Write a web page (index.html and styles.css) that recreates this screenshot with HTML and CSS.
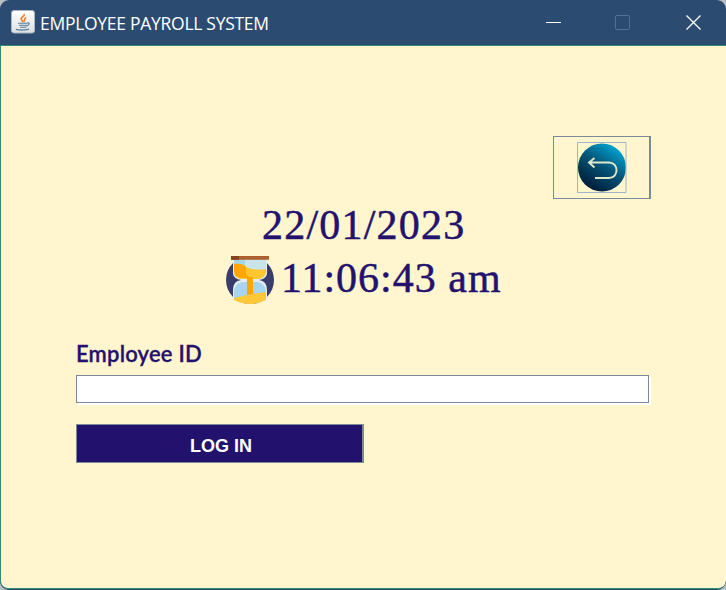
FILE: index.html
```html
<!DOCTYPE html>
<html lang="en">
<head>
<meta charset="utf-8">
<title>EMPLOYEE PAYROLL SYSTEM</title>
<link rel="stylesheet" href="styles.css">
</head>
<body>
<div class="window">
  <header class="titlebar">
    <svg class="app-icon" viewBox="0 0 24 24">
      <defs><linearGradient id="tile" x2="0" y2="1"><stop stop-color="#fff"/><stop offset="1" stop-color="#dcdfe2"/></linearGradient></defs>
      <rect x=".5" y=".5" width="23" height="22.5" rx="2.5" fill="url(#tile)" stroke="#aab6c4"/>
      <path d="M12 12c-3-3-2-4 0-5.500 1.500-1 1.500-1.500 1-2.500M12.500 12c2-2 0-2.500 2.500-4.500" fill="none" stroke="#ef8133" stroke-width="1.700"/>
      <path d="M7 13.200h9M8 15.300h7.500M9 17.300h6M16 13q3-.5 2 1.200t-3 2M5 19.400q6 1.500 13-.3" fill="none" stroke="#587d9b" stroke-width="1.100"/>
    </svg>
    <h1 class="title">EMPLOYEE PAYROLL SYSTEM</h1>
    <svg class="controls" viewBox="0 0 156 16">
      <path d="M0 7.500h15" stroke="#fff"/>
      <rect x="69.500" y=".5" width="14" height="14" rx="1" fill="none" stroke="#566f94"/>
      <path d="M140.500.5l14 14m0-14l-14 14" stroke="#fff" stroke-width="1.300"/>
    </svg>
  </header>
  <main class="client">
    <button class="back" aria-label="Back">
      <svg class="back-icon" viewBox="0 0 50 51">
        <defs><linearGradient id="disc" x1=".8" y1=".05" x2=".25" y2=".9"><stop stop-color="#00a8d5"/><stop offset=".5" stop-color="#055477"/><stop offset="1" stop-color="#001f3d"/></linearGradient></defs>
        <circle cx="25" cy="25.500" r="24" fill="url(#disc)"/>
        <path d="M17.500 16l-5.500 4.500 5.500 5M12 20.500h20c10 0 10 15.500 0 15.500H18" fill="none" stroke="#dfe7c9" stroke-width="1.900"/>
        <path d="M.5.5h48.500v50H.5z" fill="none" stroke="#9fb3c9"/>
      </svg>
    </button>
    <p class="date">22/01/2023</p>
    <div class="clock">
      <svg class="hourglass" viewBox="0 0 50 50">
        <circle cx="25" cy="25" r="24" fill="#393c6b"/>
        <path d="M8 4h34v15q-1 5-8 6 8 1 8 10v9q-16 9-34 0v-9q0-9 8-10-7-1-8-6z" fill="#e2eef0"/>
        <path d="M9 4h32v14q-2 5-9 6H18q-7-1-9-6z" fill="#c9e4ea"/>
        <path d="M9 4h11v9H9z" fill="#a5d6e8"/>
        <path d="M9 9q9-1 12 3 10 4 20 2v4q-2 6-9 6H18q-8 0-9-6z" fill="#ffc632"/>
        <path d="M9 9q9-1 12 3v7q1 2 6 4H18q-8 0-9-6z" fill="#ffa700"/>
        <path d="M17 27h16q7 2 8 9v8H9v-8q1-7 8-9z" fill="#a5d6ec"/>
        <path d="M22 22h6v18h-6z" fill="#ffa700"/>
        <path d="M9 43q6-1 12-3l20-3v8q-16 8-32 0z" fill="#ffc838"/>
        <path d="M6 1h38v3.800H6z" fill="#ad5f2d"/><path d="M6 1h8v3.800H6z" fill="#85431d"/>
      </svg>
      <p class="time">11:06:43 am</p>
    </div>
    <label class="label" for="employee-id">Employee ID</label>
    <input class="field" id="employee-id" type="text">
    <button class="login">LOG IN</button>
  </main>
</div>
</body>
</html>
```
FILE: styles.css
```css
* { box-sizing: border-box; }
body { margin: 0; background: #b9bec5; }
p, h1 { margin: 0; font-weight: 400; white-space: nowrap; }
svg { display: block; flex: none; }

.window {
  height: 590px;
  display: flex;
  flex-direction: column;
  overflow: hidden;
  border-radius: 9px;
  border-bottom: 1px solid #2c4a6e;
  background: #2c4b71;
}
.titlebar {
  height: 45px;
  flex: none;
  display: flex;
  align-items: flex-start;
  padding: 10px 24px 0 11px;
}
.app-icon { width: 24px; height: 24px; }
.title {
  margin-left: 5px;
  font: 400 17.5px/26px "Open Sans", sans-serif;
  letter-spacing: -0.28px;
  color: #fff;
}
.controls { width: 156px; height: 16px; margin: 5px 0 0 auto; }

.client {
  flex: 1;
  display: flex;
  flex-direction: column;
  align-items: flex-start;
  padding: 90px 75px 0 75px;
  border: 1px solid #2f8b72;
  border-right: 0;
  border-radius: 0 0 8px 8px;
  background: #fff6d0;
  color: #23126d;
}
.back {
  width: 98px;
  height: 63px;
  align-self: flex-end;
  display: flex;
  justify-content: center;
  align-items: center;
  padding: 0;
  border: 1px solid #7a8a99;
  border-right-width: 2px;
  background: none;
}
.back-icon { width: 50px; height: 51px; }
.date, .time {
  font: 42px/52px "Liberation Serif", serif;
  letter-spacing: 1.2px;
  -webkit-text-stroke: 0.5px #23126d;
}
.date { margin: 0 0 0 186px; }
.clock { display: flex; height: 52px; margin: 4px 0 0 149px; }
.hourglass { width: 50px; height: 50px; }
.time { margin-left: 6px; margin-top: -3px; letter-spacing: 1px; }
.label {
  margin-top: 33px;
  font: 600 22px/28px Lato, sans-serif;
  letter-spacing: 0.2px;
  -webkit-text-stroke: 0.3px #23126d;
}
.field {
  width: 573px;
  height: 28px;
  margin-top: 7px;
  padding: 0 4px;
  border: 1px solid #7a8a99;
  border-radius: 0;
  outline: 0;
  background: #fff;
  box-shadow: 2px 2px 0 #fff;
}
.login {
  width: 288px;
  height: 39px;
  margin-top: 21px;
  padding: 4px 0 0 3px;
  border: 1px solid #7a8a99;
  border-right-width: 2px;
  box-shadow: inset 0 0 0 0 #23126d;
  background: #23126d;
  color: #fff;
  font: bold 18px/20px "Liberation Sans", sans-serif;
}
```
